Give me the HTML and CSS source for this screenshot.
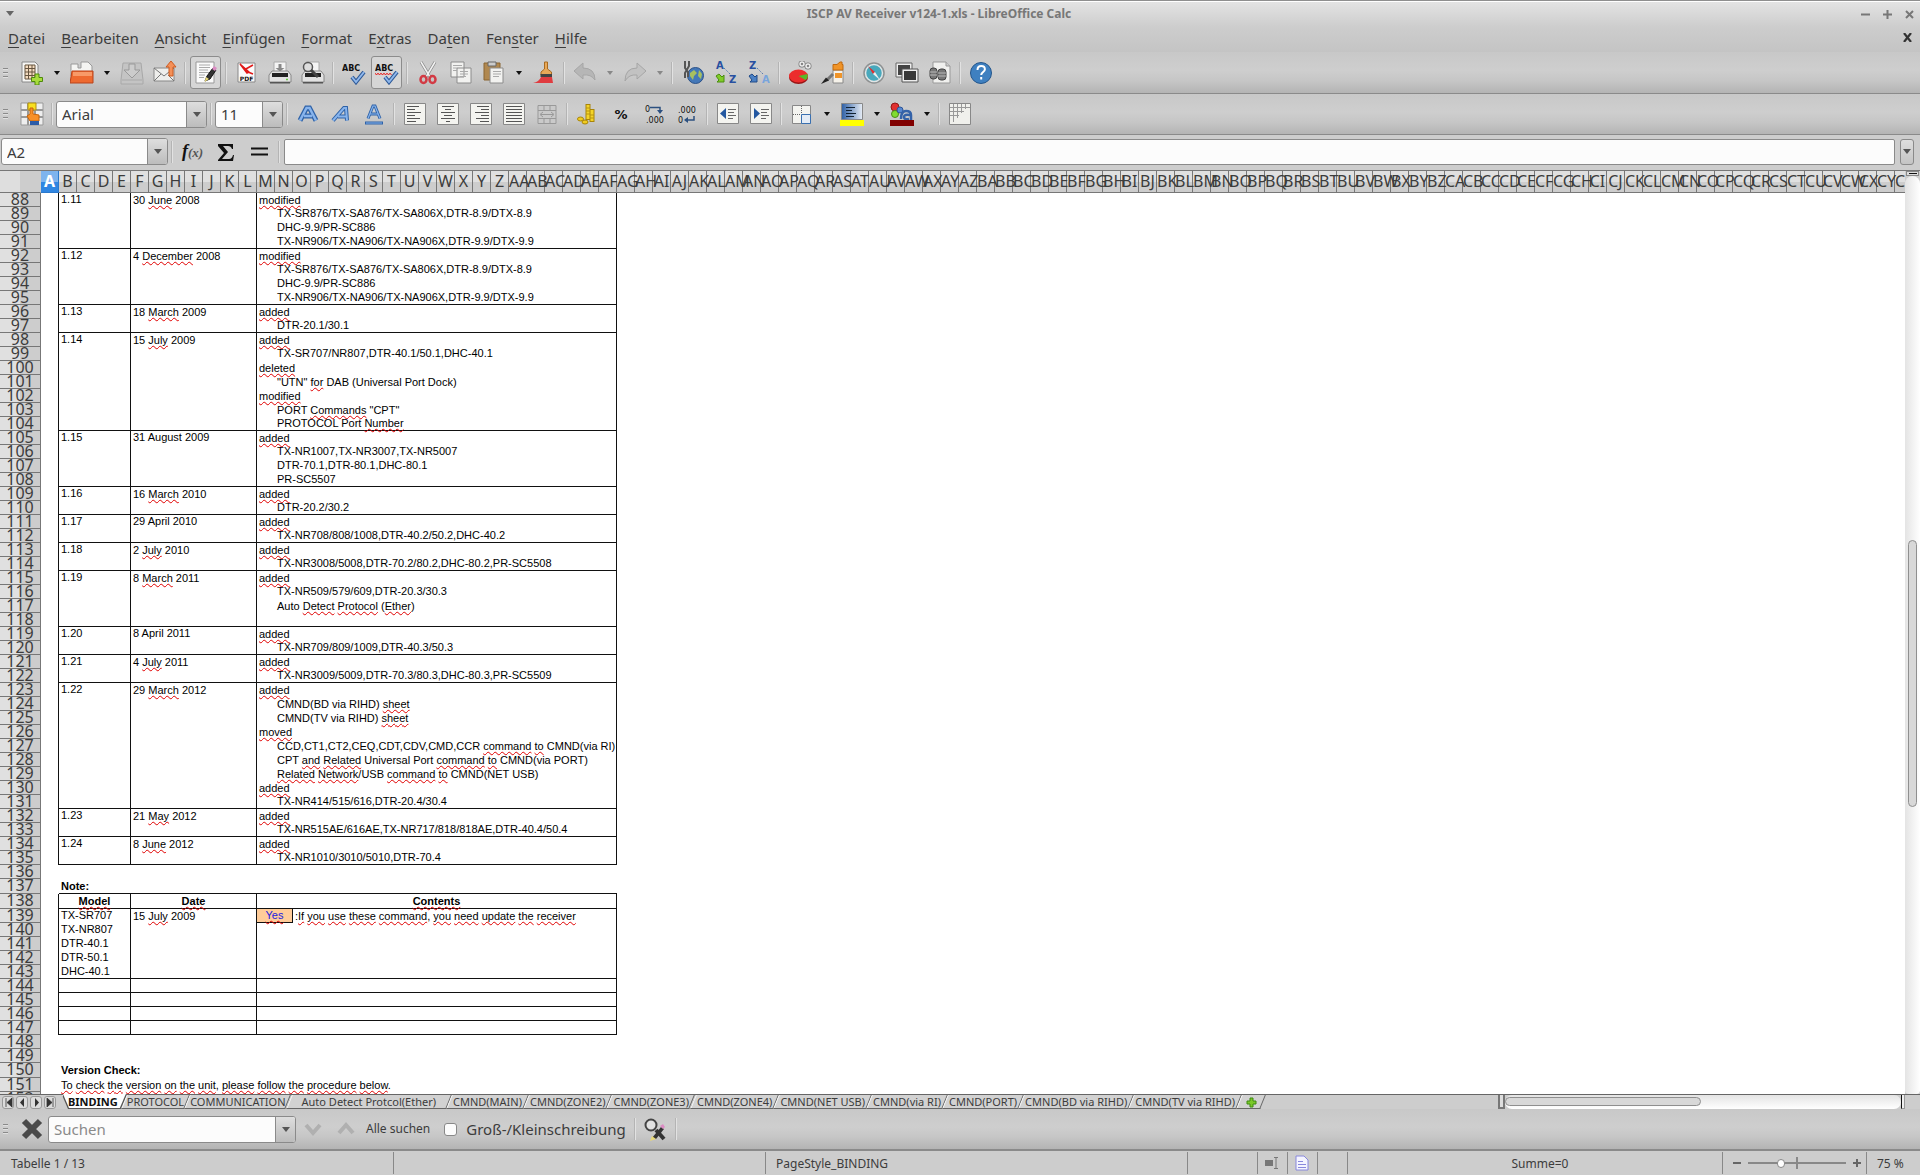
FILE: index.html
```html
<!DOCTYPE html>
<html lang="de">
<head>
<meta charset="utf-8">
<title>ISCP AV Receiver v124-1.xls - LibreOffice Calc</title>
<link rel="stylesheet" href="styles.css">
</head>
<body>
<header class="titlebar">
  <button class="win" aria-label="Fenstermenü"><svg width="8" height="6"><path d="M0 0h8L4 5z" fill="#666"/></svg></button>
  <h1>ISCP AV Receiver v124-1.xls - LibreOffice Calc</h1>
  <div class="wins">
    <button class="win" aria-label="Minimieren"><svg width="9" height="9"><path d="M0 4.500h9" stroke="#777" stroke-width="2"/></svg></button>
    <button class="win" aria-label="Maximieren"><svg width="9" height="9"><path d="M0 4.500h9M4.500 0v9" stroke="#777" stroke-width="2"/></svg></button>
    <button class="win" aria-label="Schließen"><svg width="9" height="9"><path d="M1 1l7 7M8 1L1 8" stroke="#777" stroke-width="2"/></svg></button>
  </div>
</header>
<nav class="menubar">
  <button><span>D</span>atei</button><button><span>B</span>earbeiten</button><button><span>A</span>nsicht</button><button><span>E</span>infügen</button><button><span>F</span>ormat</button><button>E<span>x</span>tras</button><button>Da<span>t</span>en</button><button>Fen<span>s</span>ter</button><button><span>H</span>ilfe</button>
  <button class="docclose" aria-label="Dokument schließen"><svg width="9" height="9"><path d="M1 0l7 9M8 0L1 9" stroke="#333" stroke-width="2.200"/></svg></button>
</nav>

<div class="toolbar">
  <span class="grip"></span>
  <button class="tb" aria-label="Neu"><svg viewBox="0 0 24 24"><path d="M2 1h13l3 3v17H2z" fill="#f6f6f4" stroke="#888"/><path d="M5 4h10v14H5zM5 7.500h10M5 11h10M5 14.500h10M8.500 4v14M12 4v14" fill="#f5dcc0" stroke="#66543f"/><path d="M15 13h4v3.500h3.500v4H19V24h-4v-3.500h-3.500v-4H15z" fill="#a8dc3c" stroke="#4e8a0c"/></svg></button><button class="dd" aria-label="Neu, Auswahl"></button>
  <button class="tb" aria-label="Öffnen"><svg viewBox="0 0 24 24"><path d="M1 3h7v4h3V1h7l4 4v10H1z" fill="#f4f4f2" stroke="#999"/><path d="M2 10h21v12H0z" fill="#ee6a30" stroke="#b8421a"/><path d="M3 11h19v4H3z" fill="#f89a68"/></svg></button><button class="dd" aria-label="Öffnen, Auswahl"></button>
  <button class="tb" aria-label="Speichern" disabled><svg viewBox="0 0 24 24"><path d="M3 2h18l2 17v4H1v-4z" fill="#c4c4c4" stroke="#a8a8a8"/><path d="M9 3h6v6h5l-8 8-8-8h5z" fill="#ccc" stroke="#999"/><path d="M2 19h20" stroke="#aaa"/></svg></button>
  <button class="tb" aria-label="Als E-Mail senden"><svg viewBox="0 0 24 24"><path d="M1 7h20v13H1z" fill="#eeeeec" stroke="#888"/><path d="M1 7l10 8L21 7M1 20l7-7M21 20l-6-6" fill="none" stroke="#777"/><path d="M18 0l5 6h-3v9h-4V6h-3z" fill="#f49058" stroke="#cc5a20"/></svg></button>
  <span class="sep"></span>
  <button class="tb on" aria-label="Bearbeiten" aria-pressed="true"><svg viewBox="0 0 24 24"><path d="M2 1h18v21H2z" fill="#fbfbfb" stroke="#999"/><path d="M5 4h11M5 6.500h11M5 9h9M5 11.500h11M5 14h6M5 16.500h5" stroke="#aaa"/><path d="M11 20l2-5 6-8 3 2-6 9z" fill="#333" stroke="#111"/><path d="M18 8l2-3 3 2-2 3z" fill="#dc8cc4"/><path d="M10.500 21l1.500-5 3 2z" fill="#e8d878"/></svg></button>
  <span class="sep"></span>
  <button class="tb" aria-label="PDF"><svg viewBox="0 0 24 24"><path d="M3 2h17v19H3z" fill="#fafafa" stroke="#888"/><path d="M5 3l9 8-2 1zM9 9l9-5M13 11l5 2" stroke="#e01818" stroke-width="1.500" fill="#e01818"/><text x="11.500" y="20" text-anchor="middle" class="px6">PDF</text></svg></button>
  <button class="tb" aria-label="Drucken"><svg viewBox="0 0 24 24"><path d="M6 1h12v10H6z" fill="#f4f4f4" stroke="#aaa"/><path d="M10.500 3h3v4h3L12 10.500 7.500 7h3z" fill="#888"/><path d="M4 10h16l3 4v7H1v-7z" fill="#e2e2e2" stroke="#888"/><path d="M4 12h16v4H4z" fill="#222"/><path d="M2 21h20v1.500H2z" fill="#555"/><path d="M18 18.500h2" stroke="#6c4" stroke-width="1.500"/></svg></button>
  <button class="tb" aria-label="Seitenansicht"><svg viewBox="0 0 24 24"><path d="M5 1h13v10H5z" fill="#f4f4f4" stroke="#aaa"/><path d="M4 10h16l3 4v7H1v-7z" fill="#e2e2e2" stroke="#888"/><path d="M4 12h16v4H4z" fill="#222"/><path d="M2 21h20v1.500H2z" fill="#555"/><circle cx="7" cy="6" r="4.500" fill="#ddd" stroke="#555" stroke-width="1.500"/><path d="M10 9l7 7" stroke="#444" stroke-width="3"/></svg></button>
  <span class="sep"></span>
  <button class="tb" aria-label="Rechtschreibung"><svg viewBox="0 0 24 24"><text x="0" y="10" class="px9">ABC</text><path d="M10 16l4 5 8-10" fill="none" stroke="#2e5a98" stroke-width="4"/><path d="M10 16l4 5 8-10" fill="none" stroke="#90b8ec" stroke-width="2"/></svg></button>
  <button class="tb on" aria-label="Automatische Rechtschreibprüfung" aria-pressed="true"><svg viewBox="0 0 24 24"><text x="0" y="10" class="px9">ABC</text><path d="M0 12.500l1.500 1 1.500-1 1.500 1 1.500-1 1.500 1 1.500-1 1.500 1 1.500-1 1.500 1 1.500-1 1.500 1" fill="none" stroke="#e00"/><path d="M10 16l4 5 8-10" fill="none" stroke="#2e5a98" stroke-width="4"/><path d="M10 16l4 5 8-10" fill="none" stroke="#90b8ec" stroke-width="2"/></svg></button>
  <span class="sep"></span>
  <button class="tb" aria-label="Ausschneiden"><svg viewBox="0 0 24 24"><path d="M5 1l9 15M19 1l-9 15" stroke="#888" stroke-width="3"/><path d="M5 1l9 15M19 1l-9 15" stroke="#f2f2f2" stroke-width="1.500"/><ellipse cx="7.500" cy="18.500" rx="3" ry="3.500" fill="none" stroke="#d23a44" stroke-width="2.500"/><ellipse cx="16.500" cy="18.500" rx="3" ry="3.500" fill="none" stroke="#d23a44" stroke-width="2.500"/></svg></button>
  <button class="tb" aria-label="Kopieren"><svg viewBox="0 0 24 24"><path d="M2 1h13v15H2zM8 7h14v15H8z" fill="#f2f2f0" stroke="#8c8c8c"/><path d="M4 4.500h9M4 7h4M4 9.500h4M11 10.500h8M11 13h8M11 15.500h6" stroke="#aaa"/></svg></button>
  <button class="tb" aria-label="Einfügen"><svg viewBox="0 0 24 24"><path d="M2 2h16v17H2z" fill="#b08850" stroke="#8a6430"/><path d="M6 1h8v4H6z" fill="#ccc" stroke="#666"/><path d="M8 7h13v15H8z" fill="#f2f2f0" stroke="#8c8c8c"/><path d="M11 10.500h8M11 13h8M11 15.500h6" stroke="#aaa"/></svg></button><button class="dd" aria-label="Einfügen, Auswahl"></button>
  <button class="tb" aria-label="Format übertragen"><svg viewBox="0 0 24 24"><path d="M12.500 1h3v7l4 3v3H9v-3l3.500-3z" fill="#e8a858" stroke="#a86a20"/><path d="M8.500 13h11.500v3H8.500z" fill="#444"/><path d="M9 16h11l1 6H1q6-1 8-6z" fill="#e03c40"/></svg></button>
  <span class="sep"></span>
  <button class="tb" aria-label="Rückgängig" disabled><svg viewBox="0 0 24 24"><path d="M1 10l9-8v5q12 0 12 12-4-6-12-5v4z" fill="#b6b6b6" stroke="#a6a6a6"/></svg></button><button class="dd dim" aria-label="Rückgängig, Auswahl"></button>
  <button class="tb" aria-label="Wiederherstellen" disabled><svg viewBox="0 0 24 24"><path d="M23 10l-9-8v5Q2 7 2 20q4-7 12-6v4z" fill="#c2c2c2" stroke="#a6a6a6"/></svg></button><button class="dd dim" aria-label="Wiederherstellen, Auswahl"></button>
  <span class="sep"></span>
  <button class="tb" aria-label="Hyperlink"><svg viewBox="0 0 24 24"><circle cx="14.500" cy="14.500" r="8" fill="#4478b8" stroke="#2c5288"/><path d="M9 12l4-3 3 3-3 3-1 4-3-4zM18 9l3 4-1 5-3-3z" fill="#a8c060"/><path d="M4 0v7l3 4v5M8 0v5L4 12v5" fill="none" stroke="#555" stroke-width="2"/></svg></button>
  <button class="tb" aria-label="Aufsteigend sortieren"><svg viewBox="0 0 24 24"><text x="2" y="8" class="px10 navy">A</text><text x="15" y="22" class="px10 navy">Z</text><path d="M10 7l7 7" stroke="#2c5aa0" stroke-dasharray="1 1.500"/><path d="M2 15l3-2 3 3 2-2v7H3l2-2z" fill="#80cc28" stroke="#4a8c10"/></svg></button>
  <button class="tb" aria-label="Absteigend sortieren"><svg viewBox="0 0 24 24"><text x="2" y="8" class="px10 navy">Z</text><text x="15" y="22" class="px10 sky">A</text><path d="M10 7l7 7" stroke="#2c5aa0" stroke-dasharray="1 1.500"/><path d="M2 15l3-2 3 3 2-2v7H3l2-2z" fill="#4a80c4" stroke="#204a88"/></svg></button>
  <span class="sep"></span>
  <button class="tb" aria-label="Diagramm"><svg viewBox="0 0 24 24"><ellipse cx="10.500" cy="16.500" rx="9.500" ry="6.500" fill="#981414"/><ellipse cx="10.500" cy="15" rx="9.500" ry="6.500" fill="#ec2c2c"/><path d="M10.500 15l9-2q1 4-2 6z" fill="#58b828"/><circle cx="14" cy="3" r="2" fill="none" stroke="#777" stroke-width="3"/><circle cx="20" cy="5" r="2" fill="none" stroke="#777" stroke-width="3"/><circle cx="14" cy="3" r="2" fill="none" stroke="#eee" stroke-width="1.500"/><circle cx="20" cy="5" r="2" fill="none" stroke="#eee" stroke-width="1.500"/></svg></button>
  <button class="tb" aria-label="Zeichenfunktionen"><svg viewBox="0 0 24 24"><path d="M12 9h10v13H12z" fill="#f6f2ea" stroke="#888"/><path d="M12 3.500h4L19 1h2v2.500h1V9H12z" fill="#f09428" stroke="#c06a10"/><path d="M14 12h7v5h-7z" fill="#f09428"/><path d="M12 13l-6 6" stroke="#777" stroke-width="3"/><path d="M5 16.500l3 3L0 23z" fill="#222"/></svg></button>
  <span class="sep"></span>
  <button class="tb" aria-label="Navigator"><svg viewBox="0 0 24 24"><circle cx="12" cy="12" r="10" fill="#48a8bc" stroke="#909090" stroke-width="1.500"/><circle cx="12" cy="12" r="8.500" fill="none" stroke="#e4e4e4" stroke-width="1.500"/><path d="M6 5l7 6-2 2z" fill="#e03030"/><path d="M18 19l-7-6 2-2z" fill="#eee"/></svg></button>
  <button class="tb" aria-label="Galerie"><svg viewBox="0 0 24 24"><path d="M2 3h14v12H2z" fill="#444" stroke="#eee" stroke-width="2"/><path d="M1 2h16v14H1z" fill="none" stroke="#666"/><path d="M8 9h14v11H8z" fill="#383838" stroke="#eee" stroke-width="2"/><path d="M7 8h16v13H7z" fill="none" stroke="#555"/></svg></button>
  <button class="tb" aria-label="Datenquellen"><svg viewBox="0 0 24 24"><path d="M5 1h13l4 4v17H5z" fill="#f0f0ee" stroke="#999"/><path d="M18 1v4h4" fill="#ccc" stroke="#999"/><rect x="2" y="7" width="7" height="11" rx="3" fill="#777" stroke="#444"/><rect x="10" y="8" width="8" height="11" rx="3" fill="#777" stroke="#444"/><path d="M2 11h7M2 14h7M10 12h8M10 15h8" stroke="#bbb"/></svg></button>
  <span class="sep"></span>
  <button class="tb" aria-label="Hilfe"><svg viewBox="0 0 24 24"><circle cx="12" cy="12" r="10.500" fill="#3f80c0" stroke="#24568c"/><path d="M8.500 9q0-4 3.700-4t3.700 3.300c0 2.700-3.700 2.700-3.700 5.700M12.200 16v2.500" fill="none" stroke="#fff" stroke-width="2"/></svg></button>
</div>

<div class="toolbar">
  <span class="grip"></span>
  <button class="tb" aria-label="Formatvorlagen"><svg viewBox="0 0 24 24"><path d="M1 1h22v22H1z" fill="#eee" stroke="#999"/><path d="M8 1v22M15 1v22M1 8h22M1 15h22" stroke="#999" stroke-width="2"/><path d="M8 1h8v7H8z" fill="#f8e020" stroke="#b09010"/><path d="M10 6h3v6l6 1v6h-9l-3-5 3-2z" fill="#f89028" stroke="#c86408"/><path d="M10 19h9v4h-9z" fill="#2c5ca8"/></svg></button>
  <span class="sep"></span>
  <div class="combo font"><input aria-label="Schriftname" value="Arial"><button aria-label="Schriftname wählen"></button></div>
  <span class="sep"></span>
  <div class="combo size"><input aria-label="Schriftgröße" value="11"><button aria-label="Schriftgröße wählen"></button></div>
  <span class="sep"></span>
  <button class="tb" aria-label="Fett"><svg viewBox="0 0 24 24"><path d="M4 18.500L10.500 6h3L20 18.500M8 14h8" fill="none" stroke="#2e62a8" stroke-width="5"/><path d="M4 18.500L10.500 6h3L20 18.500M8 14h8" fill="none" stroke="#88b4ec" stroke-width="2.500"/></svg></button>
  <button class="tb" aria-label="Kursiv"><svg viewBox="0 0 24 24"><path d="M4 18.500L15 6h2l1 12.500M9 14.500h8" fill="none" stroke="#2e62a8" stroke-width="4"/><path d="M4 18.500L15 6h2l1 12.500M9 14.500h8" fill="none" stroke="#88b4ec" stroke-width="2"/></svg></button>
  <button class="tb" aria-label="Unterstrichen"><svg viewBox="0 0 24 24"><path d="M6 16.500L11 4h2l5 12.500M8 12h8M3 21h18" fill="none" stroke="#2e62a8" stroke-width="3"/><path d="M6 16.500L11 4h2l5 12.500M8 12h8M4 21h16" fill="none" stroke="#88b4ec" stroke-width="1.200"/></svg></button>
  <span class="sep"></span>
  <button class="tb" aria-label="Linksbündig"><svg viewBox="0 0 24 24"><path d="M1.500 1.500h21v21h-21z" fill="#f4f4f0" stroke="#888"/><path d="M4 4.500h12M4 7.500h8M4 10.500h14M4 13.500h8M4 16.500h13M4 19.500h9" stroke="#555"/></svg></button>
  <button class="tb" aria-label="Zentriert"><svg viewBox="0 0 24 24"><path d="M1.500 1.500h21v21h-21z" fill="#f4f4f0" stroke="#888"/><path d="M6 4.500h12M9 7.500h6M5 10.500h14M8 13.500h8M5 16.500h14M10 19.500h4" stroke="#555"/></svg></button>
  <button class="tb" aria-label="Rechtsbündig"><svg viewBox="0 0 24 24"><path d="M1.500 1.500h21v21h-21z" fill="#f4f4f0" stroke="#888"/><path d="M8 4.500h12M12 7.500h8M6 10.500h14M12 13.500h8M7 16.500h13M11 19.500h9" stroke="#555"/></svg></button>
  <button class="tb" aria-label="Blocksatz"><svg viewBox="0 0 24 24"><path d="M1.500 1.500h21v21h-21z" fill="#f4f4f0" stroke="#888"/><path d="M4 4.500h16M4 7.500h16M4 10.500h16M4 13.500h16M4 16.500h16M4 19.500h16" stroke="#555"/></svg></button>
  <button class="tb" aria-label="Zellen verbinden" disabled><svg viewBox="0 0 24 24"><path d="M3 3.500h18v18H3zM3 8.500h18M3 16.500h18M9 3.500v5M15 3.500v5M9 16.500v5M15 16.500v5" fill="#cacaca" stroke="#999"/><path d="M6 12.500h12M8 10l-3 2.500L8 15M16 10l3 2.500-3 2.500" fill="none" stroke="#999"/></svg></button>
  <span class="sep"></span>
  <button class="tb" aria-label="Währung"><svg viewBox="0 0 24 24"><path d="M12 2v16M16 7v13" stroke="#a88408" stroke-width="5"/><path d="M12 3v14M16 8v11" stroke="#f4d428" stroke-width="3"/><path d="M10 6h4M10 9h4M10 12h4M14 13h4M14 16h4" stroke="#b89410"/><ellipse cx="4.500" cy="17" rx="3" ry="2" fill="#f0cc20" stroke="#a88408"/><ellipse cx="9" cy="20" rx="3" ry="2" fill="#f0cc20" stroke="#a88408"/></svg></button>
  <button class="tb" aria-label="Prozent"><svg viewBox="0 0 24 24"><text x="12" y="17" text-anchor="middle" class="px14">%</text></svg></button>
  <button class="tb" aria-label="Dezimalstelle hinzufügen"><svg viewBox="0 0 24 24"><text x="3" y="10" class="px8">0</text><text x="4" y="21" class="px8">.000</text><path d="M8 5.500h10v3" fill="none" stroke="#2c5080" stroke-width="1.500"/><path d="M15 8h6l-3 4z" fill="#2c5080"/></svg></button>
  <button class="tb" aria-label="Dezimalstelle löschen"><svg viewBox="0 0 24 24"><text x="3" y="11" class="px8">.000</text><text x="3" y="21" class="px8">0</text><path d="M19 14v4h-6" fill="none" stroke="#2c5080" stroke-width="1.500"/><path d="M9 18l4-3v6z" fill="#2c5080"/></svg></button>
  <span class="sep"></span>
  <button class="tb" aria-label="Einzug vermindern"><svg viewBox="0 0 24 24"><path d="M1.500 1.500h21v20h-21z" fill="#f4f4f0" stroke="#888"/><path d="M10 6v11l-6-5.500z" fill="#2458a0"/><path d="M12 7.500h8M12 10.500h6M12 13.500h8M12 16.500h5" stroke="#666"/></svg></button>
  <button class="tb" aria-label="Einzug erhöhen"><svg viewBox="0 0 24 24"><path d="M1.500 1.500h21v20h-21z" fill="#f4f4f0" stroke="#888"/><path d="M5 6v11l6-5.500z" fill="#2458a0"/><path d="M12 7.500h8M12 10.500h6M12 13.500h8M12 16.500h5" stroke="#666"/></svg></button>
  <span class="sep"></span>
  <button class="tb" aria-label="Umrandung"><svg viewBox="0 0 24 24"><path d="M2.500 3.500h18v18h-18z" fill="#f4f4f0" stroke="#888"/><path d="M11.500 4v8M3 12.500h8" stroke="#666" stroke-dasharray="1 1"/><path d="M11.500 12.500h9v9h-9z" fill="#e4ecf6" stroke="#3a70b0"/></svg></button><button class="dd" aria-label="Umrandung, Auswahl"></button>
  <button class="tb" aria-label="Hintergrundfarbe"><svg viewBox="0 0 24 24"><defs><linearGradient id="bg"><stop offset="0" stop-color="#2c5ea4"/><stop offset="1" stop-color="#e8eef6"/></linearGradient></defs><path d="M1.500 1.500h21v16h-21z" fill="url(#bg)" stroke="#888"/><path d="M6 5.500h9M6 8.500h6M6 11.500h10M6 14.500h8" stroke="#123"/><path d="M0 18h24v6H0z" fill="#ff0"/></svg></button><button class="dd" aria-label="Hintergrundfarbe, Auswahl"></button>
  <button class="tb" aria-label="Schriftfarbe"><svg viewBox="0 0 24 24"><circle cx="5" cy="5" r="4" fill="#e03030" stroke="#901818"/><circle cx="5" cy="12" r="3.500" fill="#80dc30" stroke="#4a8c18"/><circle cx="10" cy="8" r="3" fill="#5888d0" stroke="#2c5498"/><path d="M11 17q0-8 5-8 5 0 5 4v5M20 13q-6-1-6 2 0 3 5 2" fill="none" stroke="#3462a8" stroke-width="2.500"/><path d="M0 18h24v6H0z" fill="#800000"/></svg></button><button class="dd" aria-label="Schriftfarbe, Auswahl"></button>
  <span class="sep"></span>
  <button class="tb" aria-label="Gitterlinien"><svg viewBox="0 0 24 24"><path d="M1.500 1.500h21v21h-21z" fill="#f0f0ec" stroke="#888"/><path d="M2 5.500h20M2 9.500h14M2 13.500h9M5.500 2v18M9.500 2v14M13.500 2v9M17.500 2v5" stroke="#999"/></svg></button>
</div>

<div class="formulabar">
  <div class="combo cell"><input aria-label="Namenfeld" value="A2"><button aria-label="Namenfeld wählen"></button></div>
  <span class="sep"></span>
  <button class="tb fx" aria-label="Funktionsassistent">f<small>(x)</small></button>
  <button class="tb" aria-label="Summe"><svg viewBox="0 0 24 24"><path d="M4 4h15v5h-1q-1-3-4-3H9l5 6-6 7h7q3 0 4-4h1l-1 6H4v-1l6-7-6-7z" fill="#111"/></svg></button>
  <button class="tb" aria-label="Funktion"><svg viewBox="0 0 24 24"><path d="M4 8.500h17M4 14.500h17" stroke="#111" stroke-width="2"/></svg></button>
  <span class="sep"></span>
  <input class="formula" aria-label="Eingabezeile">
  <button class="expand" aria-label="Eingabezeile aufklappen"></button>
</div>

<main class="sheetarea">
<div class="sheet">
<table>
<colgroup><col class="rh"><col span="104" class="c"></colgroup>
<thead><tr><td class="corner"></td><th class="cur">A<th>B<th>C<th>D<th>E<th>F<th>G<th>H<th>I<th>J<th>K<th>L<th>M<th>N<th>O<th>P<th>Q<th>R<th>S<th>T<th>U<th>V<th>W<th>X<th>Y<th>Z<th>AA<th>AB<th>AC<th>AD<th>AE<th>AF<th>AG<th>AH<th>AI<th>AJ<th>AK<th>AL<th>AM<th>AN<th>AO<th>AP<th>AQ<th>AR<th>AS<th>AT<th>AU<th>AV<th>AW<th>AX<th>AY<th>AZ<th>BA<th>BB<th>BC<th>BD<th>BE<th>BF<th>BG<th>BH<th>BI<th>BJ<th>BK<th>BL<th>BM<th>BN<th>BO<th>BP<th>BQ<th>BR<th>BS<th>BT<th>BU<th>BV<th>BW<th>BX<th>BY<th>BZ<th>CA<th>CB<th>CC<th>CD<th>CE<th>CF<th>CG<th>CH<th>CI<th>CJ<th>CK<th>CL<th>CM<th>CN<th>CO<th>CP<th>CQ<th>CR<th>CS<th>CT<th>CU<th>CV<th>CW<th>CX<th>CY<th>CZ</tr></thead>
<tbody class="ruled">
<tr><th>88<td><td colspan="4">1.11<td colspan="7">30 <u>June</u> 2008<td colspan="20"><u>modified</u>
<tr><th>89<td><td colspan="4"><td colspan="7"><td colspan="20" class="in">TX-SR876/TX-SA876/TX-SA806X,DTR-8.9/DTX-8.9
<tr><th>90<td><td colspan="4"><td colspan="7"><td colspan="20" class="in">DHC-9.9/PR-SC886
<tr class="end"><th>91<td><td colspan="4"><td colspan="7"><td colspan="20" class="in">TX-NR906/TX-NA906/TX-NA906X,DTR-9.9/DTX-9.9
<tr><th>92<td><td colspan="4">1.12<td colspan="7">4 <u>December</u> 2008<td colspan="20"><u>modified</u>
<tr><th>93<td><td colspan="4"><td colspan="7"><td colspan="20" class="in">TX-SR876/TX-SA876/TX-SA806X,DTR-8.9/DTX-8.9
<tr><th>94<td><td colspan="4"><td colspan="7"><td colspan="20" class="in">DHC-9.9/PR-SC886
<tr class="end"><th>95<td><td colspan="4"><td colspan="7"><td colspan="20" class="in">TX-NR906/TX-NA906/TX-NA906X,DTR-9.9/DTX-9.9
<tr><th>96<td><td colspan="4">1.13<td colspan="7">18 <u>March</u> 2009<td colspan="20"><u>added</u>
<tr class="end"><th>97<td><td colspan="4"><td colspan="7"><td colspan="20" class="in">DTR-20.1/30.1
<tr><th>98<td><td colspan="4">1.14<td colspan="7">15 <u>July</u> 2009<td colspan="20"><u>added</u>
<tr><th>99<td><td colspan="4"><td colspan="7"><td colspan="20" class="in">TX-SR707/NR807,DTR-40.1/50.1,DHC-40.1
<tr><th>100<td><td colspan="4"><td colspan="7"><td colspan="20"><u>deleted</u>
<tr><th>101<td><td colspan="4"><td colspan="7"><td colspan="20" class="in">"UTN" <u>for</u> DAB (Universal Port Dock)
<tr><th>102<td><td colspan="4"><td colspan="7"><td colspan="20"><u>modified</u>
<tr><th>103<td><td colspan="4"><td colspan="7"><td colspan="20" class="in">PORT <u>Commands</u> "CPT"
<tr class="end"><th>104<td><td colspan="4"><td colspan="7"><td colspan="20" class="in">PROTOCOL Port <u>Number</u>
<tr><th>105<td><td colspan="4">1.15<td colspan="7">31 August 2009<td colspan="20"><u>added</u>
<tr><th>106<td><td colspan="4"><td colspan="7"><td colspan="20" class="in">TX-NR1007,TX-NR3007,TX-NR5007
<tr><th>107<td><td colspan="4"><td colspan="7"><td colspan="20" class="in">DTR-70.1,DTR-80.1,DHC-80.1
<tr class="end"><th>108<td><td colspan="4"><td colspan="7"><td colspan="20" class="in">PR-SC5507
<tr><th>109<td><td colspan="4">1.16<td colspan="7">16 <u>March</u> 2010<td colspan="20"><u>added</u>
<tr class="end"><th>110<td><td colspan="4"><td colspan="7"><td colspan="20" class="in">DTR-20.2/30.2
<tr><th>111<td><td colspan="4">1.17<td colspan="7">29 April 2010<td colspan="20"><u>added</u>
<tr class="end"><th>112<td><td colspan="4"><td colspan="7"><td colspan="20" class="in">TX-NR708/808/1008,DTR-40.2/50.2,DHC-40.2
<tr><th>113<td><td colspan="4">1.18<td colspan="7">2 <u>July</u> 2010<td colspan="20"><u>added</u>
<tr class="end"><th>114<td><td colspan="4"><td colspan="7"><td colspan="20" class="in">TX-NR3008/5008,DTR-70.2/80.2,DHC-80.2,PR-SC5508
<tr><th>115<td><td colspan="4">1.19<td colspan="7">8 <u>March</u> 2011<td colspan="20"><u>added</u>
<tr><th>116<td><td colspan="4"><td colspan="7"><td colspan="20" class="in">TX-NR509/579/609,DTR-20.3/30.3
<tr><th>117<td><td colspan="4"><td colspan="7"><td colspan="20" class="in">Auto <u>Detect</u> <u>Protocol</u> (<u>Ether</u>)
<tr class="end"><th>118<td><td colspan="4"><td colspan="7"><td colspan="20">
<tr><th>119<td><td colspan="4">1.20<td colspan="7">8 April 2011<td colspan="20"><u>added</u>
<tr class="end"><th>120<td><td colspan="4"><td colspan="7"><td colspan="20" class="in">TX-NR709/809/1009,DTR-40.3/50.3
<tr><th>121<td><td colspan="4">1.21<td colspan="7">4 <u>July</u> 2011<td colspan="20"><u>added</u>
<tr class="end"><th>122<td><td colspan="4"><td colspan="7"><td colspan="20" class="in">TX-NR3009/5009,DTR-70.3/80.3,DHC-80.3,PR-SC5509
<tr><th>123<td><td colspan="4">1.22<td colspan="7">29 <u>March</u> 2012<td colspan="20"><u>added</u>
<tr><th>124<td><td colspan="4"><td colspan="7"><td colspan="20" class="in">CMND(BD via RIHD) <u>sheet</u>
<tr><th>125<td><td colspan="4"><td colspan="7"><td colspan="20" class="in">CMND(TV via RIHD) <u>sheet</u>
<tr><th>126<td><td colspan="4"><td colspan="7"><td colspan="20"><u>moved</u>
<tr><th>127<td><td colspan="4"><td colspan="7"><td colspan="20" class="in">CCD,CT1,CT2,CEQ,CDT,CDV,CMD,CCR <u>command</u> <u>to</u> CMND(via RI)
<tr><th>128<td><td colspan="4"><td colspan="7"><td colspan="20" class="in">CPT <u>and</u> <u>Related</u> Universal Port <u>command</u> <u>to</u> CMND(via PORT)
<tr><th>129<td><td colspan="4"><td colspan="7"><td colspan="20" class="in"><u>Related</u> <u>Network</u>/USB <u>command</u> <u>to</u> CMND(NET USB)
<tr><th>130<td><td colspan="4"><td colspan="7"><td colspan="20"><u>added</u>
<tr class="end"><th>131<td><td colspan="4"><td colspan="7"><td colspan="20" class="in">TX-NR414/515/616,DTR-20.4/30.4
<tr><th>132<td><td colspan="4">1.23<td colspan="7">21 <u>May</u> 2012<td colspan="20"><u>added</u>
<tr class="end"><th>133<td><td colspan="4"><td colspan="7"><td colspan="20" class="in">TX-NR515AE/616AE,TX-NR717/818/818AE,DTR-40.4/50.4
<tr><th>134<td><td colspan="4">1.24<td colspan="7">8 <u>June</u> 2012<td colspan="20"><u>added</u>
<tr class="end"><th>135<td><td colspan="4"><td colspan="7"><td colspan="20" class="in">TX-NR1010/3010/5010,DTR-70.4
</tbody>
<tbody>
<tr><th>136<td><td colspan="31">
<tr class="tall end"><th>137<td><td colspan="31" class="b">Note:
</tbody>
<tbody class="ruled">
<tr class="tall end heads"><th>138<td><td colspan="4"><u>Model</u><td colspan="7"><u>Date</u><td colspan="20"><u>Contents</u>
<tr><th>139<td><td colspan="4">TX-SR707<td colspan="7">15 <u>July</u> 2009<td colspan="2" class="yes"><u>Yes</u><td colspan="18">:<u>If</u> <u>you</u> <u>use</u> <u>these</u> <u>command</u>, <u>you</u> <u>need</u> <u>update</u> <u>the</u> <u>receiver</u>
<tr><th>140<td><td colspan="4">TX-NR807<td colspan="7"><td colspan="20">
<tr><th>141<td><td colspan="4">DTR-40.1<td colspan="7"><td colspan="20">
<tr><th>142<td><td colspan="4">DTR-50.1<td colspan="7"><td colspan="20">
<tr class="end"><th>143<td><td colspan="4">DHC-40.1<td colspan="7"><td colspan="20">
<tr class="end"><th>144<td><td colspan="4"><td colspan="7"><td colspan="20">
<tr class="end"><th>145<td><td colspan="4"><td colspan="7"><td colspan="20">
<tr class="end"><th>146<td><td colspan="4"><td colspan="7"><td colspan="20">
<tr class="end"><th>147<td><td colspan="4"><td colspan="7"><td colspan="20">
</tbody>
<tbody>
<tr><th>148<td><td colspan="31">
<tr><th>149<td><td colspan="31">
<tr class="tall"><th>150<td><td colspan="31" class="b">Version Check:
<tr><th>151<td><td colspan="31"><u>To</u> <u>check</u> <u>the</u> <u>version</u> <u>on</u> <u>the</u> <u>unit</u>, <u>please</u> <u>follow</u> <u>the</u> <u>procedure</u> <u>below</u>.
<tr><th>152<td><td colspan="31">
</tbody>
</table>
</div>
<div class="vscroll"><span class="split"></span><div class="vtrack"><div class="vthumb"></div></div></div>
</main>

<div class="tabstrip">
  <div class="tabnav">
    <button aria-label="Erste Tabelle"><svg width="9" height="9"><path d="M2 0v9M8 0v9L3 4.500z" stroke="#333" fill="#333" stroke-width=".8"/></svg></button>
    <button aria-label="Vorherige Tabelle"><svg width="9" height="9"><path d="M6 0v9L2 4.500z" fill="#333"/></svg></button>
    <button aria-label="Nächste Tabelle"><svg width="9" height="9"><path d="M3 0v9l4-4.500z" fill="#333"/></svg></button>
    <button aria-label="Letzte Tabelle"><svg width="9" height="9"><path d="M7 0v9M1 0v9l5-4.500z" stroke="#333" fill="#333" stroke-width=".8"/></svg></button>
  </div>
  <nav class="tabs">
    <button class="active">BINDING</button><button class="tight">PROTOCOL</button><button class="tight">COMMUNICATION</button><button class="wide">Auto Detect Protcol(Ether)</button><button>CMND(MAIN)</button><button>CMND(ZONE2)</button><button>CMND(ZONE3)</button><button>CMND(ZONE4)</button><button>CMND(NET USB)</button><button>CMND(via RI)</button><button>CMND(PORT)</button><button>CMND(BD via RIHD)</button><button>CMND(TV via RIHD)</button><button class="add" aria-label="Tabelle hinzufügen"><svg width="11" height="11"><path d="M4 1h3v3h3v3H7v3H4V7H1V4h3z" fill="#7ac828" stroke="#3c8a10"/></svg></button>
  </nav>
  <div class="hscroll"><span class="hsplit"></span><div class="htrack"><div class="hthumb"></div></div><span class="hend"></span></div>
</div>

<div class="findbar">
  <span class="grip"></span>
  <button class="tb" aria-label="Suchleiste schließen"><svg viewBox="0 0 24 24"><path d="M4 4l16 16M20 4L4 20" stroke="#4a4a4a" stroke-width="6"/></svg></button>
  <div class="combo find"><input aria-label="Suchen" placeholder="Suchen"><button aria-label="Suchverlauf"></button></div>
  <button class="tb" aria-label="Weitersuchen" disabled><svg viewBox="0 0 24 24"><path d="M5 8l7 8 7-8" fill="none" stroke="#b0b0b0" stroke-width="4"/></svg></button>
  <button class="tb" aria-label="Rückwärts suchen" disabled><svg viewBox="0 0 24 24"><path d="M5 16l7-8 7 8" fill="none" stroke="#b0b0b0" stroke-width="4"/></svg></button>
  <button class="all">Alle suchen</button>
  <label><input type="checkbox">Groß-/Kleinschreibung</label>
  <span class="sep"></span>
  <button class="tb" aria-label="Suchen und Ersetzen"><svg viewBox="0 0 24 24"><circle cx="8" cy="8" r="5.500" fill="#e2e2e2" stroke="#444" stroke-width="2"/><path d="M13 13l8 9" stroke="#333" stroke-width="4"/><path d="M9 21l9-11 3 2-8 10z" fill="#333"/><path d="M17 9l3-2 2 3-2 2z" fill="#dc8cc4"/><path d="M7 24l2-5 4 3z" fill="#e8d878"/></svg></button>
  <span class="sep"></span>
</div>

<footer class="status">
  <span class="s1">Tabelle 1 / 13</span><span class="s2"></span><span class="s3">PageStyle_BINDING</span><span class="s4"></span>
  <span class="s5"><svg width="14" height="12"><path d="M0 3h8v6H0z" fill="#777"/><path d="M9 .5h4M9 11.500h4M11 1v10" stroke="#777"/></svg></span>
  <span class="s5"><svg width="14" height="16"><path d="M1 1h8l4 4v10H1z" fill="#f4f4ff" stroke="#8888dc"/><path d="M3 6.500h5M3 9.500h8M3 12.500h8" stroke="#8888dc"/></svg></span>
  <span class="s6"></span><span class="s7">Summe=0</span>
  <span class="s8"><button aria-label="Verkleinern"><svg width="8" height="8"><path d="M0 4h8" stroke="#666" stroke-width="2"/></svg></button><input type="range" min="0" max="100" value="32" aria-label="Maßstab"><button aria-label="Vergrößern"><svg width="8" height="8"><path d="M0 4h8M4 0v8" stroke="#666" stroke-width="2"/></svg></button></span>
  <span class="s9">75 %</span>
</footer>
</body>
</html>
```
FILE: styles.css
```css
* { box-sizing: border-box; }
body {
  margin: 0;
  height: 100vh;
  display: flex;
  flex-direction: column;
  overflow: hidden;
  background: #cdcdcd;
  color: #3c3c3c;
  font: 15px/20px "Noto Sans", "Open Sans", sans-serif;
}
button, input { font: inherit; color: inherit; margin: 0; }
button { padding: 0; border: 0; background: none; }
svg { display: block; }

/* title and menu */
.titlebar {
  flex: none;
  height: 27px;
  display: grid;
  grid-template-columns: 1fr auto 1fr;
  align-items: center;
  padding: 0 6px;
  border-top: 1px solid #8f8f8f;
  box-shadow: inset 0 1px #fff;
  background: linear-gradient(#e4e4e4, #cdcdcd);
}
.titlebar h1 { margin: 0 42px 0 0; font-size: 12px; font-weight: bold; color: #777; }
.wins { justify-self: end; display: flex; gap: 13px; }
.menubar {
  flex: none;
  height: 25px;
  display: flex;
  align-items: center;
  padding-bottom: 4px;
  background: linear-gradient(#cdcdcd, #c4c4c4);
}
.menubar button { padding: 0 8px; }
.menubar span { text-decoration: underline #3c3c3c 1px; text-underline-offset: 3px; text-decoration-skip-ink: none; }
.menubar .docclose { margin-left: auto; }

/* toolbars */
.toolbar, .findbar {
  flex: none;
  height: 41px;
  display: flex;
  align-items: center;
  border-bottom: 1px solid #8a8a8a;
  background: linear-gradient(#c8c8c8, #cecece 45%, #c6c6c6 70%, #b4b4b4);
}
.menubar + .toolbar { height: 42px; }
.grip {
  width: 5px;
  height: 10px;
  margin: 0 7px 0 3px;
  background: repeating-linear-gradient(#8a8a8a 0 1px, #e0e0e0 1px 2px, transparent 2px 4px);
}
.tb { flex: none; width: 33px; height: 33px; display: grid; place-items: center; border-radius: 3px; }
.tb svg { width: 24px; height: 24px; }
.tb.on { border: 1px solid #8c8c8c; background: #d6d6d6; width: 31px; margin: 0 1px; }
.sep { flex: none; width: 8px; height: 22px; background: linear-gradient(#b4b4b4, #b4b4b4) 3px 0 / 1px 100% no-repeat, linear-gradient(#e2e2e2, #e2e2e2) 4px 0 / 1px 100% no-repeat; }
.dd { flex: none; width: 17px; height: 33px; display: grid; place-items: center; }
.dd::before, .combo button::before, .expand::before {
  content: "";
  border: 4px solid transparent;
  border-top: 5px solid #555;
  border-bottom: 0;
}
.dd::before { border-width: 4px 3px 0; border-top-color: #111; }
.dd.dim::before { border-top-color: #888; }
.px6, .px8, .px9, .px10, .px14 { font-family: "DejaVu Sans", sans-serif; font-weight: bold; fill: #111; }
.px6 { font-size: 6px; }
.px8 { font-size: 8px; font-weight: normal; }
.px9 { font-size: 8px; }
.px10 { font-size: 10px; }
.px14 { font-size: 13px; }
.navy { fill: #2850a0; }
.sky { fill: #78a4dc; }

.combo {
  flex: none;
  height: 27px;
  display: flex;
  border: 1px solid #8a8a8a;
  border-radius: 3px;
  background: #fcfcfc;
  overflow: hidden;
}
.combo input { flex: 1; min-width: 0; border: 0; background: none; padding: 0 5px; outline: 0; }
.combo button {
  width: 20px;
  display: grid;
  place-items: center;
  border-left: 1px solid #8a8a8a;
  background: linear-gradient(#dedede, #bcbcbc);
}
.combo input::placeholder { color: #8a8a8a; opacity: 1; }
.font { width: 151px; }
.size { width: 68px; }
.cell { width: 167px; }
.find { width: 248px; }

/* formula bar */
.formulabar {
  flex: none;
  height: 36px;
  display: flex;
  align-items: center;
  padding: 0 6px 2px 1px;
  border-bottom: 1px solid #777;
}
.fx { display: block; font: italic bold 18px/32px "Liberation Serif", serif; color: #111; }
.fx small { font-size: 13px; color: #555; }
.formula { flex: 1; min-width: 0; height: 26px; border: 1px solid #8a8a8a; border-radius: 2px; background: #fcfcfc; padding: 0 5px; margin-left: 1px; }
.expand {
  width: 14px;
  height: 26px;
  margin-left: 5px;
  display: grid;
  place-items: center;
  border: 1px solid #8a8a8a;
  border-radius: 3px;
  background: linear-gradient(#dedede, #c4c4c4);
}

/* sheet */
.sheetarea { flex: 1; min-height: 0; display: flex; background: #fff; }
.sheet { flex: 1; min-width: 0; overflow: hidden; }
table { table-layout: fixed; width: 1913px; border-spacing: 0; color: #000; font: 11px/13px "Liberation Sans", Arial, sans-serif; }
.rh { width: 41px; }
.c { width: 18px; }
th, td { padding: 0; white-space: nowrap; text-align: left; vertical-align: top; }
thead th, thead td {
  height: 22px;
  border-right: 1px solid #777;
  border-bottom: 1px solid #777;
  background: linear-gradient(#e0e0e0 50%, #cdcdcd 50%);
}
th { font: 16px/21px "Noto Sans", "Open Sans", sans-serif; color: #3c3c3c; text-align: center; }
thead .corner { border-right-color: #cdcdcd; background: linear-gradient(90deg, #dedede 50%, #cdcdcd 50%); }
thead .cur { background: linear-gradient(#7eb4ee 50%, #2f86e2 50%); color: #fff; font-weight: bold; border-color: #2a78cc; }
tbody th {
  height: 14px;
  line-height: 13px;
  border-right: 1px solid #777;
  border-bottom: 1px solid #777;
  background: linear-gradient(90deg, #e0e0e0 50%, #cdcdcd 50%);
}
tbody td { height: 14px; padding-left: 2px; }
tr:not(.end) td:has(u) { line-height: 14px; }
.tall th, .tall td { height: 15px; }
.tall td { line-height: 14px; }
.ruled td { border-right: 1px solid #111; }
.end td:not(:nth-child(2)) { border-bottom: 1px solid #111; }
tbody td.in { padding-left: 20px; }
.b, .heads td { font-weight: bold; }
.heads td { text-align: center; padding: 0; }
tbody tr td.yes { background: #ffcc99; color: #2020e0; border-bottom: 1px solid #111; text-align: center; padding: 0; line-height: 13px; }
u { text-decoration: underline wavy #e00000 1px; text-decoration-skip-ink: none; text-underline-offset: 1px; }

.vscroll { flex: none; width: 15px; display: flex; flex-direction: column; background: #cdcdcd; }
.split { flex: none; height: 5px; margin: 0 1px; border: 1px solid #888; background: linear-gradient(#111, #111) center / 8px 1px no-repeat #ddd; }
.vtrack { flex: 1; border-radius: 8px 8px 4px 4px; background: linear-gradient(90deg, #e4e4e4, #fff); }
.vtrack::before { content: ""; display: block; height: 39.700%; }
.vthumb { width: 9px; height: 29%; margin-left: 3px; border: 1px solid #8f8f8f; border-radius: 5px; background: #d8d8d8; }

/* sheet tabs */
.tabstrip { flex: none; height: 15px; display: flex; background: #cdcdcd; border-top: 1px solid #666; }
.tabnav { display: flex; gap: 2px; padding: 1px 2px 0; }
.tabnav button { width: 12px; height: 13px; display: grid; place-items: center; border: 1px solid #999; border-radius: 3px; background: #dcdcdc; }
.tabs { flex: 1; display: flex; margin-left: 4px; }
.tabs button {
  position: relative;
  z-index: 0;
  height: 14px;
  padding: 0 4px;
  font-size: 11px;
  line-height: 14px;
  white-space: nowrap;
}
.tabs button::before {
  content: "";
  position: absolute;
  z-index: -1;
  inset: 0;
  transform: skewX(-22deg);
  border: solid #666;
  border-width: 0 1px 1px 0;
  box-shadow: inset 1px 0 #f4f4f4;
  background: #d2d2d2;
}
.tabs .active { font-weight: bold; color: #111; padding: 0 6px; }
.tabs .active::before { transform: none; inset: 0 -3px 0 0; border: 0; background: #555; clip-path: polygon(0 0, 100% 0, calc(100% - 6px) 100%, 6px 100%); }
.tabs .active::after { content: ""; position: absolute; z-index: -1; inset: -1px -2px 1px 1px; background: #fff; clip-path: polygon(0 0, 100% 0, calc(100% - 6px) 100%, 6px 100%); }
.tabs .tight { padding: 0 3px; }
.tabs .wide { padding: 0 13px; }
.tabs .add { width: 24px; display: grid; place-items: center; }
.hscroll { flex: none; width: 22%; display: flex; padding-right: 15px; }
.hsplit { flex: none; width: 7px; border: 2px solid #777; border-top: 0; background: #ddd; }
.htrack { flex: 1; background: linear-gradient(#e4e4e4, #fff); padding-top: 2px; border-radius: 7px; }
.hthumb { width: 49.500%; height: 9px; border: 1px solid #8f8f8f; border-radius: 5px; background: #d8d8d8; }
.hend { width: 4px; border: 1px solid #999; border-top: 0; border-left-color: #111; background: #eee; }

/* find bar */
.findbar { height: 42px; border-bottom-width: 2px; }
.all { font-size: 12px; margin: 0 14px 0 4px; }
.findbar label { display: flex; align-items: center; gap: 9px; margin-right: 5px; }
.findbar input[type=checkbox] { appearance: none; width: 13px; height: 13px; border: 1px solid #888; border-radius: 3px; background: #fcfcfc; }

/* status bar */
.status { flex: none; height: 24px; display: flex; font-size: 12px; padding-left: 11px; }
.status > span { padding-left: 10px; height: 22px; margin-top: 1px; border-left: 1px solid #888; line-height: 24px; }
.status .s1 { width: 20%; border: 0; padding: 0; }
.s2 { width: 19.500%; }
.s3 { width: 22.100%; }
.s4 { width: 70px; }
.s5, .s6 { width: 30px; }
.status .s5 { display: grid; place-items: center; padding: 0; }
.s7 { flex: 1; text-align: center; }
.s8 { width: 144px; display: flex; align-items: center; gap: 7px; }
.s9 { width: 54px; }
.s8 input {
  appearance: none;
  width: 98px;
  height: 12px;
  background: linear-gradient(#888, #888) 48px 0 / 2px 100% no-repeat, linear-gradient(#888, #888) center / 100% 2px no-repeat;
}
.s8 input::-webkit-slider-thumb { appearance: none; width: 8px; height: 9px; border: 1px solid #888; border-radius: 4px; background: #fff; }
```
